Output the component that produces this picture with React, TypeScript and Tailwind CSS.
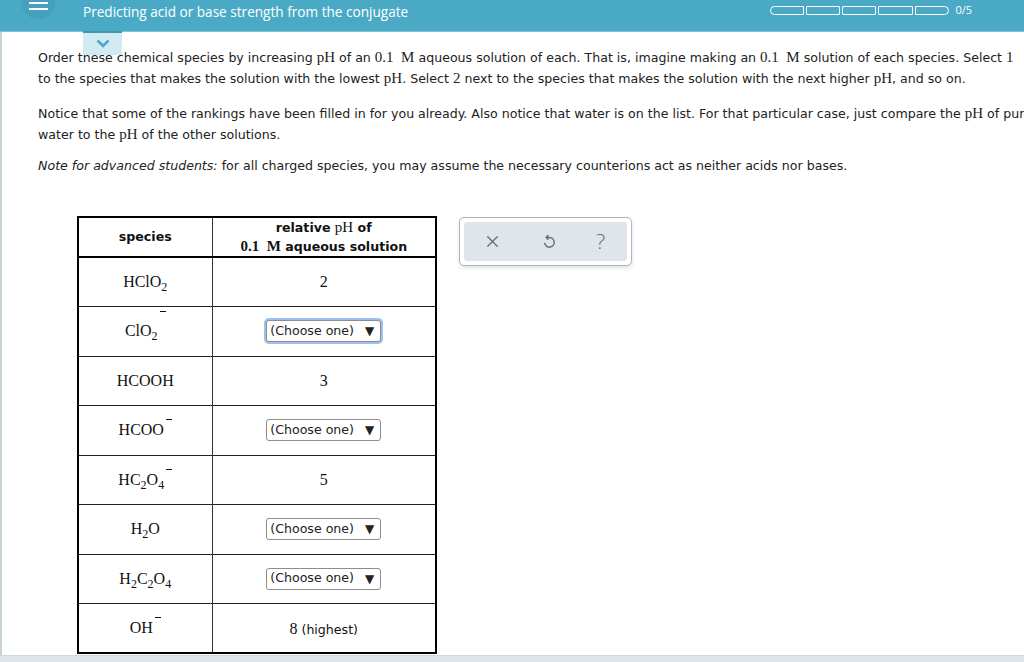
import React from 'react';
import { X } from 'lucide-react';

const sans = 'font-["DejaVu_Sans",Verdana,sans-serif]';
const serif = 'font-["Liberation_Serif","Times_New_Roman",serif]';

// inline math in the prompt text
function M({ children }: { children: React.ReactNode }) {
  return <span className={`${serif} text-[15px]`}>{children}</span>;
}

// charge sign drawn as a short bar above the formula
function Minus({ high = false }: { high?: boolean }) {
  return (
    <span
      className={`relative inline-block ml-[2px] w-[6px] h-px bg-[#111] ${high ? '-top-[24px]' : '-top-[15px]'}`}
    />
  );
}

function Sub({ n }: { n: string }) {
  return <span className="relative top-[4px] text-[12px]">{n}</span>;
}

function ChooseOne({ focused = false }: { focused?: boolean }) {
  return (
    <div className={focused ? 'rounded-[5px] p-[2px] bg-[#9cc1ee]' : 'p-[2px]'}>
      <div className={`${sans} flex items-center justify-between w-[115px] h-[22px] pl-[3px] pr-[6px] bg-white border border-[#8d8d8d] rounded-[3px] text-[12.6px] text-[#222]`}>
        <span>(Choose one)</span>
        <span className="text-[12px]">▼</span>
      </div>
    </div>
  );
}

const rows: { species: React.ReactNode; value: React.ReactNode }[] = [
  { species: <>HClO<Sub n="2" /></>, value: <span className={`${serif} text-[16px]`}>2</span> },
  { species: <>ClO<Sub n="2" /><Minus high /></>, value: <ChooseOne focused /> },
  { species: <>HCOOH</>, value: <span className={`${serif} text-[16px]`}>3</span> },
  { species: <>HCOO<Minus /></>, value: <ChooseOne /> },
  { species: <>HC<Sub n="2" />O<Sub n="4" /><Minus /></>, value: <span className={`${serif} text-[16px]`}>5</span> },
  { species: <>H<Sub n="2" />O</>, value: <ChooseOne /> },
  { species: <>H<Sub n="2" />C<Sub n="2" />O<Sub n="4" /></>, value: <ChooseOne /> },
  {
    species: <>OH<Minus /></>,
    value: (
      <span>
        <span className={`${serif} text-[16px]`}>8</span>
        <span className={`${sans} text-[12.6px]`}> (highest)</span>
      </span>
    ),
  },
];

function Progress() {
  return (
    <div className="flex items-center gap-[2px]">
      <div className="w-[34px] h-[9px] border-[1.5px] border-white rounded-l-full rounded-r-[1px]" />
      <div className="w-[34px] h-[9px] border-[1.5px] border-white rounded-[1px]" />
      <div className="w-[34px] h-[9px] border-[1.5px] border-white rounded-[1px]" />
      <div className="w-[35px] h-[9px] border-[1.5px] border-white rounded-[1px]" />
      <div className="w-[34px] h-[9px] border-[1.5px] border-white rounded-r-full rounded-l-[1px]" />
      <span className='ml-[4px] text-[11px] text-white font-["Open_Sans",sans-serif]'>0/5</span>
    </div>
  );
}

export default function App() {
  return (
    <div className="relative w-[1024px] h-[662px] overflow-hidden bg-white flex flex-col">
      {/* top bar */}
      <header className="relative h-[31px] shrink-0 bg-[#4aaac6] flex items-center">
        <div className="absolute left-[21px] -top-[15px] w-[34px] h-[34px] rounded-full bg-[#45a0bb] flex flex-col items-center justify-end pb-[9px] gap-[4px]">
          <div className="w-[19px] h-[2px] bg-white" />
          <div className="w-[19px] h-[2px] bg-white" />
        </div>
        <h1 className='pl-[83px] -mt-[6px] text-[13.6px] text-white font-["Open_Sans",sans-serif]'>
          Predicting acid or base strength from the conjugate
        </h1>
        <div className="ml-auto mr-[52px] -mt-[11px]">
          <Progress />
        </div>
      </header>
      <div className="h-px bg-[#7cc5db] shrink-0" />

      <main className="relative flex-1 border-l-2 border-[#c7d3d9] pl-[36px] pt-[15px]">
        {/* collapse tab */}
        <div className="absolute z-10 left-[81px] -top-[1px] w-[39px] h-[24px] bg-[#d2eaf1] border-t-2 border-[#3f98b2] flex items-center justify-center pb-[2px]">
          <svg width="14" height="9" viewBox="0 0 14 9" fill="none">
            <path d="M1.5 1.5 L7 7 L12.5 1.5" stroke="#4aaac6" strokeWidth="2.6" />
          </svg>
        </div>

        <div className={`${sans} text-[12.6px] leading-[21px] text-[#222] whitespace-nowrap`}>
          <p>
            Order these chemical species by increasing <M>pH</M> of an <M>0.1</M>
            <M>&nbsp;&nbsp;M</M> aqueous solution of each. That is, imagine making an <M>0.1</M>
            <M>&nbsp;&nbsp;M</M> solution of each species. Select <M>1</M>
            <br />
            to the species that makes the solution with the lowest <M>pH</M>. Select <M>2</M> next to the
            species that makes the solution with the next higher <M>pH</M>, and so on.
          </p>
          <p className="mt-[14px]">
            Notice that some of the rankings have been filled in for you already. Also notice that water
            is on the list. For that particular case, just compare the <M>pH</M> of pure
            <br />
            water to the <M>pH</M> of the other solutions.
          </p>
          <p className="mt-[10px]">
            <i>Note for advanced students:</i> for all charged species, you may assume the necessary
            counterions act as neither acids nor bases.
          </p>
        </div>

        <div className="flex items-start gap-[22px] mt-[40px] ml-[39px]">
          <table className="border-collapse border-2 border-black text-[#111]">
            <thead>
              <tr className="h-[40px] border-b-2 border-black">
                <th className={`${sans} w-[134px] text-[12.6px] font-bold border-r border-[#333]`}>species</th>
                <th className={`${sans} w-[224px] text-[12.6px] font-bold leading-[18px]`}>
                  relative <span className={`${serif} text-[15px] font-normal`}>pH</span> of
                  <br />
                  <span className={`${serif} text-[15px]`}>0.1&nbsp;&nbsp;M</span> aqueous solution
                </th>
              </tr>
            </thead>
            <tbody>
              {rows.map((r, i) => (
                <tr key={i} className="h-[49.5px] border-b border-[#222]">
                  <td className={`${serif} text-[16px] text-center border-r border-[#333]`}>{r.species}</td>
                  <td className="text-center">
                    <div className="flex justify-center">{r.value}</div>
                  </td>
                </tr>
              ))}
            </tbody>
          </table>

          {/* answer tools */}
          <div className="mt-[1px] p-[4px] bg-white border border-[#aab7be] rounded-[5px] shadow-[0_2px_4px_rgba(0,0,0,0.12)]">
            <div className="w-[163px] h-[39px] bg-[#dfe5e8] rounded-[3px] flex items-center justify-between pl-[19px] pr-[22px] text-[#566f7c]">
              <X size={19} strokeWidth={1.5} />
              <svg width="14" height="16" viewBox="0 0 14 16" fill="none" stroke="currentColor" strokeWidth="1.4" strokeLinecap="round">
                <path d="M5 3.5 H7.5 A4.8 4.8 0 1 1 2.8 9.5" />
                <path d="M6 1.5 L4.2 3.5 L6 5.2" />
              </svg>
              <span className='text-[21px] leading-none font-["Open_Sans",sans-serif] font-light'>?</span>
            </div>
          </div>
        </div>
      </main>

      <div className="h-[7px] shrink-0 bg-[#dfe5e9] border-t border-[#cfd8dd]" />
    </div>
  );
}
